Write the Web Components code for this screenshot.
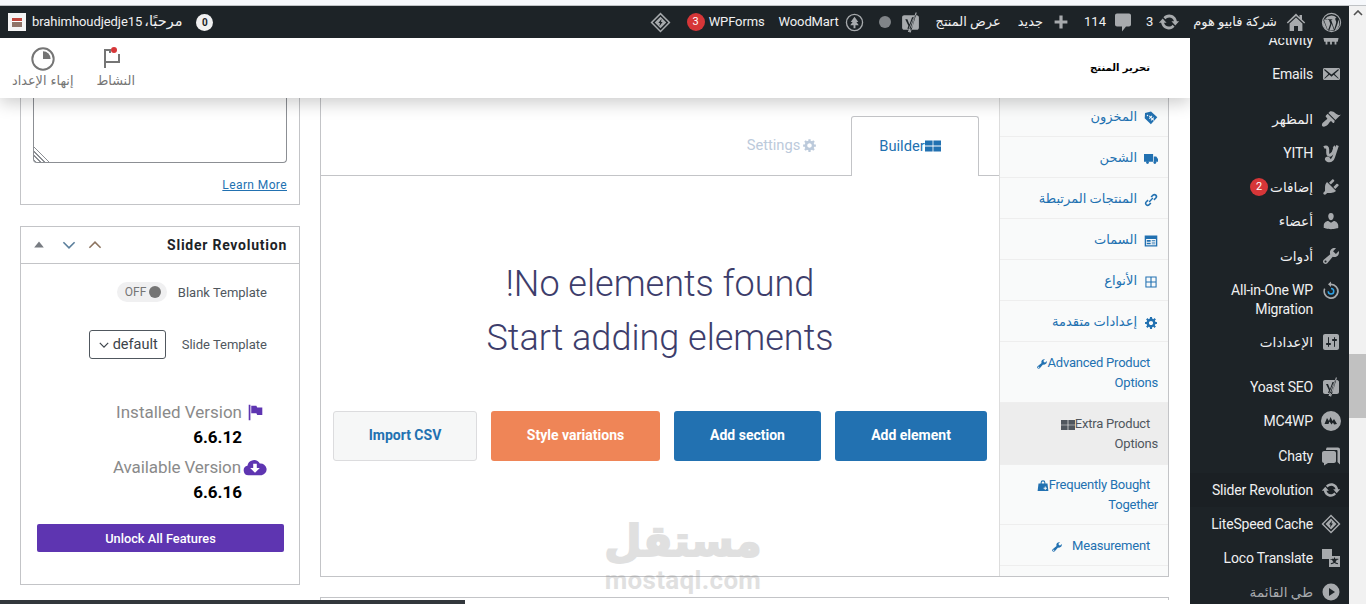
<!DOCTYPE html>
<html lang="ar"><head><meta charset="utf-8"><title>تحرير المنتج</title>
<style>html,body{margin:0;padding:0;height:604px;overflow:hidden;background:#fff;font-family:Roboto,"DejaVu Sans",sans-serif}</style>
</head><body>
<wp-app></wp-app>
<script>
const P={
wp:'<path fill-rule="evenodd" d="M10 .8a9.2 9.2 0 1 0 0 18.4A9.2 9.2 0 0 0 10 .8zm0 1a8.2 8.2 0 1 1 0 16.4A8.2 8.2 0 0 1 10 1.800zM2.700 7.200 6.600 17.600 8.900 11.200 7.600 7.500 6.500 7.400V6.800H10.800V7.400L9.700 7.500 12.700 16.400 14 12C14.700 9.800 14.600 8.900 13.900 7.800 13.300 6.800 13.500 5.500 14.800 5.300A7.300 7.300 0 0 0 3.800 6.800L6 6.800V7.400ZM16.300 7.100C16.500 9 15.800 10.800 15.200 12.500L13.200 17.500A7.300 7.300 0 0 0 16.300 7.100ZM10.200 11.300 8 17.300A7.300 7.300 0 0 0 12.300 17.100ZM2.400 8.200A7.300 7.300 0 0 0 5.900 17Z"/>',
home:'<path d="M10 1.500 .8 10.600l1 1L10 4l8.200 7.600 1-1-3.200-3V3h-2.500v2.300zM10 5.500 3.600 11.400V19h4.400v-5h4v5h4.400v-7.600z"/>',
update:'<path d="M10.200 3.280c3.530 0 6.430 2.610 6.920 6h2.080l-3.500 4-3.500-4h2.320c-.45-1.970-2.210-3.450-4.320-3.450-1.450 0-2.730.71-3.540 1.780L4.950 5.660C6.230 4.200 8.110 3.280 10.200 3.280zm-.4 13.440c-3.520 0-6.430-2.610-6.920-6H.8l3.500-4c1.170 1.330 2.330 2.670 3.500 4H5.480c.45 1.970 2.210 3.450 4.320 3.450 1.450 0 2.730-.71 3.540-1.780l1.710 1.950c-1.280 1.460-3.150 2.380-5.250 2.380z"/>',
comment:'<path d="M4 1.500h12c1.100 0 2 .9 2 2v9c0 1.100-.9 2-2 2h-3l-4 5v-5H4c-1.100 0-2-.9-2-2v-9c0-1.100.9-2 2-2z"/>',
plus:'<path d="M8 2h4v6h6v4h-6v6H8v-6H2V8h6z"/>',
yoast:'<path fill-rule="evenodd" d="M4 3h10l-1 2-1.500 3L9 14l-1 3H4c-1.100 0-2-.9-2-2V5c0-1.100.9-2 2-2zm10.500.2 1.500-.2c1.100.2 2 1 2 2v10c0 1.100-.9 2-2 2h-6l-.8 2H7.500l1-2.800c2-.1 2.900-1.300 3.500-3zM14.800 .5 9 19.500h1.200L16 .5zM5 7h2l2 5 2.500-7h1.800L9.500 14.800 8.800 16H7l1-2.800z"/>',
tree:'<path fill-rule="evenodd" d="M10 .8a9.200 9.200 0 1 0 0 18.400A9.200 9.200 0 0 0 10 .8zm0 1.400a7.800 7.800 0 1 1 0 15.600 7.800 7.800 0 0 1 0-15.600zM10 4 6 9.500h2L5.500 13H9v3h2v-3h3.500L12 9.500h2z"/>',
dia:'<path fill-rule="evenodd" d="M10 .5 19.500 10 10 19.500 .5 10zM10 2.500 2.500 10l7.500 7.500 7.500-7.500zM10 4.500 15.500 10 10 15.500 4.500 10zM11 6.500 8 10.500h1.500L9 13.500 12 9.500h-1.500z"/>',
mail:'<path d="M19 14.500v-9c0-.83-.67-1.500-1.500-1.500H3.490c-.83 0-1.500.67-1.500 1.500v9c0 .83.67 1.500 1.500 1.500H17.500c.83 0 1.500-.67 1.500-1.500zm-1.310-9.110c.33.33.15.67-.03.84L13.600 9.950l3.900 4.060c.12.14.2.36.06.51-.13.16-.43.15-.56.05l-4.370-3.730-2.140 1.950-2.130-1.950-4.370 3.730c-.13.1-.43.11-.56-.05-.14-.15-.06-.37.06-.51l3.900-4.060-4.060-3.720c-.18-.17-.36-.51-.03-.84s.67-.17.95.07l6.240 5.040 6.250-5.040c.28-.24.62-.4.95-.07z"/>',
cart:'<path d="M1 5h18l-1.500 7H16v3h-2v-3h-3v3H9v-3H6v3H4v-3H2.500z"/>',
brush:'<path d="M14.480 11.060L7.410 3.990l1.500-1.500c.5-.56 2.300-.47 3.510.32 1.210.8 1.430 1.280 2.910 2.100 1.180.64 2.450 1.260 4.450.85zm-.71.71L6.700 4.700 4.930 6.470c-.39.39-.39 1.020 0 1.410l1.060 1.060c.39.39.39 1.030 0 1.420-.6.6-1.430 1.110-2.210 1.690-.35.26-.7.53-1.010.84C1.430 13.230.28 16.080 1.400 17.200c1.120 1.120 3.970-.03 5.310-1.370.31-.31.58-.66.84-1.010.58-.78 1.090-1.610 1.690-2.210.39-.39 1.030-.39 1.420 0l1.060 1.060c.39.39 1.020.39 1.410 0z"/>',
yith:'<path fill="none" stroke="currentColor" stroke-width="3" d="M3 4.500c2.200-1.200 3.700-.5 3.700 2v3.500c0 2 1.300 2.700 3 1.800 1.800-1 3.300-3.500 3.800-6 .2-1-.2-1.800-1-2.300"/><path fill="none" stroke="currentColor" stroke-width="2.600" d="M16.500 2.500l-3.800 11.500c-1 3-3.500 4.300-6 3.700-1.600-.4-1.900-2-.9-2.600 1-.6 2.100.3 2.600 1.500"/>',
plug:'<path d="M13.110 4.360L9.870 7.600 8 5.730l3.240-3.240c.35-.34 1.050-.2 1.560.32.52.51.66 1.210.31 1.550zm-8 1.770l.91-1.120 9.010 9.010-1.190.84c-.71.71-2.630 1.160-3.820 1.160H6.140L4.900 17.260c-.59.59-1.540.59-2.120 0-.59-.58-.59-1.530 0-2.120l1.240-1.240v-3.880c0-1.130.4-3.190 1.090-3.890zm7.260 3.970l3.240-3.240c.34-.35 1.040-.21 1.550.31.52.51.66 1.210.31 1.550l-3.240 3.250z"/>',
user:'<path d="M10 9.250c-2.270 0-2.730-3.440-2.730-3.440C7 4.020 7.820 2 9.970 2c2.160 0 2.980 2.020 2.710 3.810 0 0-.41 3.440-2.680 3.440zm0 2.570L12.720 10c2.390 0 4.520 2.330 4.520 4.530v2.490s-3.650 1.130-7.240 1.130c-3.650 0-7.240-1.130-7.240-1.130v-2.490c0-2.250 1.940-4.480 4.470-4.480z"/>',
wrench:'<path d="M16.680 9.770c-1.340 1.340-3.300 1.670-4.950.99l-5.410 6.520c-.99.99-2.590.99-3.580 0s-.99-2.590 0-3.570l6.520-5.420c-.68-1.650-.35-3.610.99-4.950 1.280-1.280 3.120-1.620 4.720-1.060l-2.890 2.890 2.820 2.820 2.860-2.870c.53 1.580.18 3.390-1.080 4.650zM3.810 16.210c.4.39 1.040.39 1.430 0 .4-.4.4-1.040 0-1.430-.39-.4-1.030-.4-1.430 0-.39.39-.39 1.030 0 1.430z"/>',
sliders:'<path d="M18 16V4c0-1.100-.9-2-2-2H4c-1.100 0-2 .9-2 2v12c0 1.100.9 2 2 2h12c1.100 0 2-.9 2-2zM8 11h1c.55 0 1 .45 1 1s-.45 1-1 1H8v1.500c0 .28-.22.5-.5.5s-.5-.22-.5-.5V13H6c-.55 0-1-.45-1-1s.45-1 1-1h1V5.500c0-.28.22-.5.5-.5s.5.22.5.5V11zm5-2h-1c-.55 0-1-.45-1-1s.45-1 1-1h1V5.500c0-.28.22-.5.5-.5s.5.22.5.5V7h1c.55 0 1 .45 1 1s-.45 1-1 1h-1v5.500c0 .28-.22.5-.5.5s-.5-.22-.5-.5V9z"/>',
aio:'<path d="M10 .5 7 3.300 10 6V4.300a6 6 0 1 1-5.600 3.800L3 7.300A7.700 7.700 0 1 0 10 2.600z"/><path fill="#2ea2e6" d="M6.500 10.300a3.500 3.500 0 1 0 3.500-3.500v1.500a2 2 0 1 1-2 2z"/>',
mc:'<path fill-rule="evenodd" d="M10 0a10 10 0 1 0 0 20 10 10 0 0 0 0-20zM3.500 13l2.500-6 2 3 1.500-4 2 4 1.500-2 3 5-3 .5-1-2-1.500 2-2-3-1 2.500z"/>',
chat:'<path d="M6 1.500h11c1.100 0 2 .9 2 2v15l-2.500-2.500V5c0-.5-.4-1-1-1H5c0-1 .4-2.500 1-2.500z"/><path d="M3 5h10c1 0 2 .9 2 2v8c0 1.100-1 2-2 2H7l-4 2.500V17c-1 0-2-.9-2-2V7c0-1.100 1-2 2-2z"/>',
loco:'<path d="M1 1h10v10H1z"/><path fill-rule="evenodd" d="M8 8h11v11H8zM13 9.500v1.300h-3.500v1H11c.3 1 .8 1.800 1.500 2.500-.8.5-1.700.8-2.800 1l.4 1c1.300-.3 2.400-.7 3.300-1.400.9.7 2 1.100 3.300 1.400l.4-1c-1.100-.2-2-.5-2.800-1 .7-.7 1.200-1.500 1.500-2.500h1.500v-1H14V9.500z"/>',
play:'<path fill-rule="evenodd" d="M10 1.500a8.500 8.500 0 1 0 0 17 8.500 8.500 0 0 0 0-17zM8 6l6 4-6 4z"/>',
tag:'<path fill-rule="evenodd" d="M10 .8 19 8.800 9.800 19 1 10.500l.5-7.600zM5 5.200a1 1 0 1 0 .01 0zM8 6.500l-1 1 1.500 1.500-1.500 1.500 1 1 1.500-1.500 1.500 1.500-1.500 1.500 1 1 1.500-1.500 1.500 1.500 1-1-1.500-1.500 1.500-1.500-1-1-1.500 1.500-1.500-1.500 1.500-1.500-1-1-1.500 1.500z"/>',
truck:'<path d="M0 3h13v11H0zM14 6.500h3.500L20 10v4h-6z"/><circle cx="5" cy="15" r="2"/><circle cx="15.500" cy="15" r="2"/>',
link:'<path d="M17.700 2.300a3.900 3.900 0 0 0-5.500 0L9.400 5.100l1.500 1.500 2.800-2.800a1.800 1.800 0 0 1 2.500 2.500l-2.800 2.800 1.500 1.500 2.800-2.800a3.900 3.900 0 0 0 0-5.500zM9.100 13.400l-2.800 2.800a1.800 1.800 0 0 1-2.500-2.500l2.800-2.800-1.500-1.500-2.800 2.800a3.900 3.900 0 0 0 5.500 5.500l2.800-2.800zM6.600 12 12 6.600l1.400 1.400L8 13.400z"/>',
card:'<path fill-rule="evenodd" d="M1 2h18v16H1zM3 7v9h14V7zM4 8.500h5.500v2.500H4zM11 8.500h5v1h-5zM11 11h5v1h-5zM4 12.500h5.500v2H4zM11 13.500h5v1h-5z"/>',
grid:'<path fill-rule="evenodd" d="M2 2h16v16H2zM3.500 3.500v5.700h5.700V3.500zm7.300 0v5.700h5.700V3.500zM3.500 10.800v5.700h5.700v-5.700zm7.300 0v5.700h5.700v-5.700z"/>',
gear:'<path d="M18 12h-2.180c-.17.7-.44 1.350-.81 1.930l1.540 1.540-2.100 2.100-1.540-1.540c-.58.36-1.230.63-1.910.79V19H8v-2.180c-.68-.16-1.330-.43-1.910-.79l-1.540 1.540-2.120-2.120 1.540-1.540c-.36-.58-.63-1.230-.79-1.910H1V9.030h2.170c.16-.7.44-1.350.8-1.940L2.430 5.550l2.100-2.100 1.540 1.540c.58-.37 1.240-.64 1.930-.81V2h3v2.180c.68.16 1.330.43 1.910.79l1.540-1.540 2.120 2.120-1.540 1.540c.36.59.64 1.240.8 1.940H18V12zm-8.500 1.500c1.660 0 3-1.340 3-3s-1.340-3-3-3-3 1.340-3 3 1.340 3 3 3z" transform="translate(.5 -.5)"/>',
win:'<path d="M0 3h9.500v6.500H0zM10.500 3H20v6.500h-9.500zM0 10.500h9.500V17H0zM10.500 10.500H20V17h-9.500z"/>',
bag:'<path fill-rule="evenodd" d="M6 6V4.500a4 4 0 0 1 8 0V6h3.500L19 18.500H1L2.500 6zM7.800 6h4.400V4.500a2.200 2.200 0 0 0-4.400 0zM13 11v2h-2v1.500h2v2h1.500v-2h2V13h-2v-2z"/>',
flag:'<path d="M2 1h2v18H2zM5 2h6l1 2h6v9h-6l-1-2H5z"/>',
cloud:'<path fill-rule="evenodd" d="M4.500 16a4 4 0 0 1-.8-7.900A5.500 5.500 0 0 1 14 6.300 4.900 4.900 0 0 1 15.500 16zM8.500 6.500V10H6l4 4 4-4h-2.500V6.500z"/>',
chevd:'<path fill="none" stroke="currentColor" stroke-width="2" d="M3 6.500l7 7 7-7"/>',
chevu:'<path fill="none" stroke="currentColor" stroke-width="2" d="M3 13.500l7-7 7 7"/>',
tri:'<path d="M10 4l8 10H2z"/>',
flagdot:'<path fill="none" stroke="currentColor" stroke-width="2" d="M3 21V3h5v3M3 15h14V7"/><circle cx="12" cy="3" r="3" fill="#d63638"/>',
pie:'<circle cx="11" cy="11" r="9.800" fill="none" stroke="currentColor" stroke-width="1.800"/><path d="M11 4a7 7 0 0 1 7 7h-7z"/>'
};
function def(tag,html){customElements.define(tag,class extends HTMLElement{constructor(){super();this.attachShadow({mode:'open'}).innerHTML=html;}});}

customElements.define('wp-ic',class extends HTMLElement{
 connectedCallback(){const n=this.getAttribute('n'),s=this.getAttribute('s')||20,vb=this.getAttribute('vb')||'0 0 20 20';
  if(!this.shadowRoot)this.attachShadow({mode:'open'});
  this.shadowRoot.innerHTML=`<style>:host{display:inline-flex;flex:none;line-height:0;vertical-align:middle}svg{display:block;fill:currentColor}</style><svg width="${s}" height="${s}" viewBox="${vb}" aria-hidden="true">${P[n]||''}</svg>`;}
});

def('bar-item',`<style>:host{display:flex;align-items:center;height:32px;gap:var(--g,8px);font:13px/32px Roboto,"DejaVu Sans",sans-serif;color:#f0f0f1;white-space:nowrap}::slotted(wp-ic){color:#a7aaad}</style><slot></slot>`);
def('bar-badge',`<style>:host{display:inline-flex;align-items:center;justify-content:center;width:18px;height:18px;border-radius:9px;background:#d63638;color:#fff;font:11px/18px Roboto,sans-serif}</style><slot></slot>`);

def('admin-bar',`<style>:host{display:flex;flex:none;direction:rtl;height:32px;background:#1d2327;align-items:center;padding:0 7px 0 8px;box-sizing:border-box}
.dot{width:12px;height:12px;border-radius:50%;background:#808488;margin-right:9px}
.l{margin-right:auto;display:flex;align-items:center;gap:14px}
.av{width:18px;height:18px;background:#f4f4f4;display:flex;align-items:center;justify-content:center;margin-right:4px}.av i{display:block;width:10px;height:9px;background:linear-gradient(#c0463c 0 3px,#fff 3px 4px,#8f7468 4px)}
.z{width:17px;height:17px;border-radius:50%;background:#f0f0f1;color:#1d2327;font:700 10px/17px Roboto,sans-serif;text-align:center}
.g{font-size:14.500px}.la{letter-spacing:-.12px}
</style>
<bar-item><wp-ic n="wp" s="21"></wp-ic></bar-item>
<bar-item style="margin-right:15px;--g:9px"><wp-ic n="home" s="20"></wp-ic><span>شركة فابيو هوم</span></bar-item>
<bar-item style="margin-right:13px;--g:5px"><wp-ic n="update" s="22"></wp-ic><span>3</span></bar-item>
<bar-item style="margin-right:13px;--g:7px"><wp-ic n="comment" s="20"></wp-ic><span>114</span></bar-item>
<bar-item style="margin-right:15px;--g:10px"><wp-ic n="plus" s="16"></wp-ic><span>جديد</span></bar-item>
<bar-item style="margin-right:17px"><span>عرض المنتج</span></bar-item>
<bar-item style="margin-right:15px"><wp-ic n="yoast" s="21"></wp-ic></bar-item>
<div class="dot"></div>
<bar-item style="margin-right:15px;--g:6px"><wp-ic n="tree" s="19"></wp-ic><span class="la">WoodMart</span></bar-item>
<bar-item style="margin-right:14px;--g:4px"><span class="la">WPForms</span><bar-badge>3</bar-badge></bar-item>
<bar-item style="margin-right:16px"><wp-ic n="dia" s="21"></wp-ic></bar-item>
<div class="l"><div class="z">0</div><bar-item style="--g:2px"><span class="g">مرحبًا،</span><span style="letter-spacing:-.06px">brahimhoudjedje15</span><div class="av"><i></i></div></bar-item></div>`);

def('side-item',`<style>:host{display:flex;align-items:center;flex:none;min-height:34px;box-sizing:border-box;padding:0 8px 0 6px;gap:8px;font:14px/19px Roboto,"DejaVu Sans",sans-serif;letter-spacing:-.18px;color:#f0f0f1;direction:rtl}
:host([ar]){font-size:13.600px;letter-spacing:0}
.i{width:20px;display:flex;justify-content:center;color:#a7aaad;flex:none}
:host([top]) .i{align-self:flex-start;margin-top:7px}
.t{text-align:right;direction:ltr;flex:1;max-width:120px}:host([ar]) .t{direction:rtl;flex:none}
::slotted(bar-badge){margin-right:-6px}
</style><div class="i"><slot name="i"></slot></div><div class="t"><slot></slot></div><slot name="b"></slot>`);
def('side-bar',`<style>:host{display:flex;flex-direction:column;flex:none;width:159px;background:#1d2327;overflow:hidden}.w{margin-top:-15px;display:flex;flex-direction:column}</style><div class="w"><slot></slot></div>`);

def('edit-header',`<style>:host{display:flex;flex:none;height:60px;background:#fff;box-shadow:0 5px 16px rgba(0,0,0,.2);position:relative;z-index:3;align-items:center;justify-content:space-between;direction:rtl;padding:0 40px 0 12px;box-sizing:border-box}
h1{margin:0;font:700 10px/16px "DejaVu Sans",sans-serif;color:#000}
.r{display:flex;direction:rtl;gap:23px}.a{display:flex;flex-direction:column;align-items:center;font:12.800px/16px "DejaVu Sans",sans-serif;color:#757575;gap:2px}</style>
<h1>تحرير المنتج</h1><div class="r"><div class="a"><wp-ic n="flagdot" s="24" vb="0 0 24 24" style="margin-left:-3px"></wp-ic><span>النشاط</span></div><div class="a"><wp-ic n="pie" s="24" vb="0 0 22 22"></wp-ic><span>إنهاء الإعداد</span></div></div>`);

def('meta-box',`<style>:host{display:block;border:1px solid #c3c4c7;background:#fff;box-sizing:border-box;flex:none}</style><slot></slot>`);

def('learn-box',`<style>:host{display:block;flex:none;border:1px solid #c3c4c7;border-top:0;height:107px;box-sizing:border-box;padding:0 12px;background:#fff}
.ta{height:64px;border:1px solid #8c8f94;border-top:0;border-radius:0 0 4px 4px;position:relative}
.ta i{position:absolute;left:0;bottom:0;width:16px;height:16px;background:repeating-linear-gradient(45deg,transparent 0 1px,#8c8f94 1px 2px,transparent 2px 3px);clip-path:polygon(0 0,100% 100%,0 100%)}
a{display:block;text-align:right;font:12px/16px Roboto,sans-serif;letter-spacing:.4px;color:#2271b1;margin-top:14px}a span{text-decoration:underline}</style>
<div class="ta"><i></i></div><a><span>Learn More</span></a>`);

def('rev-box',`<style>:host{display:block;flex:none;height:359px;border:1px solid #c3c4c7;box-sizing:border-box;background:#fff;font-family:Roboto,sans-serif}
.h{height:36px;border-bottom:1px solid #c3c4c7;display:flex;align-items:center;padding:0 12px 0 12px;color:#787c82}
.h b{margin-left:auto;font:700 14px/20px Roboto,sans-serif;color:#1d2327;letter-spacing:.75px}
.b{padding:18px 12px 0 16px}
.row{display:flex;justify-content:flex-end;align-items:center;font-size:13px;color:#50575e}
.tog{display:flex;align-items:center;width:50px;height:20px;border-radius:10px;background:#f0f0f1;box-sizing:border-box;padding:0 6px 0 8px;font-size:12px;color:#757575;justify-content:space-between;margin-right:11px}
.tog i{width:12px;height:12px;border-radius:50%;background:#757575}
.sel{display:flex;align-items:center;width:77px;height:29px;border:1px solid #50575e;border-radius:3px;box-sizing:border-box;padding:0 8px 0 8px;gap:3px;font-size:14.500px;line-height:31px;color:#3c434a;margin-right:16px}
.v{display:flex;justify-content:flex-end;align-items:center;font-size:17px;line-height:25px;color:#8a8a8a;padding-right:23px}
.n{font:700 17px/25px Roboto,sans-serif;color:#000;text-align:right;padding-right:45px}
.btn{display:block;margin:19px 3px 0 0;height:28px;border-radius:2px;background:#5e35b1;color:#fff;font:500 12.800px/29px Roboto,sans-serif;text-align:center}
</style>
<div class="h"><wp-ic n="tri" s="12"></wp-ic><wp-ic n="chevd" s="16" style="color:#5b7f9c;margin-left:16px"></wp-ic><wp-ic n="chevu" s="16" style="color:#8d7460;margin-left:10px"></wp-ic><b>Slider Revolution</b></div>
<div class="b"><div class="row" style="margin-right:20px"><div class="tog"><span>OFF</span><i></i></div><span>Blank Template</span></div>
<div class="row" style="margin:28px 20px 0 0"><div class="sel"><wp-ic n="chevd" s="12"></wp-ic><span>default</span></div><span>Slide Template</span></div>
<div style="margin-top:41px"><div class="v"><span>Installed Version</span><wp-ic n="flag" s="17" style="color:#5e35b1;margin-left:5px"></wp-ic></div><div class="n" style="margin-bottom:5px">6.6.12</div>
<div class="v" style="padding-right:20px"><span style="letter-spacing:-.1px">Available Version</span><wp-ic n="cloud" s="24" style="color:#5e35b1;margin-left:2px"></wp-ic></div><div class="n">6.6.16</div></div>
<a class="btn">Unlock All Features</a></div>`);

def('tab-btn',`<style>:host{display:flex;align-items:center;justify-content:center;box-sizing:border-box;font:14.700px/20px Roboto,sans-serif;height:60px;gap:0}
:host([on]){width:128px;background:#fff;border:1px solid #c3c4c7;border-bottom:0;border-radius:3px 3px 0 0;color:#2271b1;margin-bottom:-1px;padding:0 10px 2px 0}
:host(:not([on])){color:#bccadb;width:74px;gap:2px}</style><slot></slot>`);

def('act-btn',`<style>:host{display:flex;align-items:center;justify-content:center;height:50px;box-sizing:border-box;border-radius:3px;padding-bottom:2px;font:700 14px/20px Roboto,sans-serif;color:#fff;background:#2271b1;flex:none}
:host([k=o]){background:#ef8557}:host([k=l]){background:#f6f7f7;border:1px solid #dcdcde;color:#2271b1}</style><slot></slot>`);

def('empty-state',`<style>:host{display:block;direction:rtl;text-align:center;color:#3d3d6b;font:300 36px/54px Roboto,sans-serif;padding-top:81px}
p{margin:0}.btns{display:flex;justify-content:flex-start;gap:14px;padding:0 12px;margin-top:46px}</style>
<p>No elements found!</p><p dir="ltr">Start adding elements</p><div class="btns"><slot></slot></div>`);

def('builder-panel',`<style>:host{display:block;flex:1;min-width:0;background:#fff}
.tabs{display:flex;direction:rtl;border-bottom:1px solid #c3c4c7;margin-top:-1px;padding:0 20px 0 0;height:59px;align-items:flex-end}
.s{display:flex;direction:ltr;margin-right:32px}</style>
<div style="height:19px"></div>
<div class="tabs"><tab-btn on style="direction:ltr"><span>Builder</span><wp-ic n="win" s="16"></wp-ic></tab-btn><div class="s"><tab-btn><span>Settings</span><wp-ic n="gear" s="15"></wp-ic></tab-btn></div></div>
<slot></slot>`);

def('prod-tab',`<style>:host{display:block;box-sizing:border-box;min-height:41px;border-bottom:1px solid #eee;direction:rtl;padding:11px 10px 0 0;font:13px/20px Roboto,"DejaVu Sans",sans-serif;color:#2271b1;text-align:right;background:#f9fafa}
:host([two]){height:61px;text-indent:8px;letter-spacing:-.22px}:host([on]){background:#ededed;color:#50575e;height:62px}
::slotted(wp-ic){margin-left:7px}:host([two]) ::slotted(wp-ic){margin:0}</style><slot></slot>`);
def('tab-list',`<style>:host{display:block;flex:none;width:168px;border-left:1px solid #ddd;background:#f9fafa;overflow:hidden}.w{margin-top:-2px}</style><div class="w"><slot></slot></div>`);

def('wm-mark',`<style>:host{position:absolute;left:604px;top:476px;width:158px;text-align:center;color:#8f8f8f;opacity:.27;pointer-events:none;z-index:2}
.a{font:700 43px/54px "DejaVu Sans",sans-serif;direction:rtl;-webkit-text-stroke:2px #8f8f8f}.b{font:700 26px/24px Roboto,sans-serif;letter-spacing:.3px}</style><div class="a">مستقل</div><div class="b">mostaql.com</div>`);

def('wp-app',`<style>:host{display:flex;width:1366px;height:604px;flex-direction:column;overflow:hidden;font-family:Roboto,"DejaVu Sans",sans-serif}
.top{height:6px;flex:none;background:#f6f8fb;border-bottom:1px solid #bfc2c5;box-sizing:border-box}
.r{flex:1;display:flex;min-height:0}.page{width:1349px;display:flex;flex-direction:column}
.sb{width:17px;flex:none;background:#f1f1f1;display:flex;flex-direction:column}.up{height:14px;display:flex;align-items:center;justify-content:center;color:#505050}.th{height:64px;background:#c1c1c1;margin-top:334px}
.body{flex:1;display:flex;min-height:0}.main{width:1190px;display:flex;flex-direction:column;position:relative;overflow:hidden}
.cols{flex:1;display:flex;min-height:0;padding-left:20px;gap:20px;overflow:hidden}
.lc{width:280px;flex:none;display:flex;flex-direction:column;gap:21px}
.cc{width:849px;flex:none;display:flex;flex-direction:column;gap:20px}
.box{height:479px;border-top:0}
.hb{height:4px;flex:none;background:#fff;display:flex}.hb i{display:block;width:465px;background:#32373c}
</style>
<div class="top"></div>
<div class="r"><div class="page"><admin-bar></admin-bar><div class="body"><div class="main"><edit-header></edit-header>
<div class="cols"><div class="lc"><learn-box></learn-box><rev-box></rev-box></div>
<div class="cc"><meta-box class="box"><div style="display:flex;height:100%">
<builder-panel><empty-state>
<act-btn style="width:152px">Add element</act-btn><act-btn style="width:147px">Add section</act-btn><act-btn k="o" style="width:169px">Style variations</act-btn><act-btn k="l" style="width:144px">Import CSV</act-btn></empty-state></builder-panel>
<tab-list>
<prod-tab><wp-ic n="tag" s="14"></wp-ic>المخزون</prod-tab>
<prod-tab><wp-ic n="truck" s="14"></wp-ic>الشحن</prod-tab>
<prod-tab><wp-ic n="link" s="14"></wp-ic>المنتجات المرتبطة</prod-tab>
<prod-tab><wp-ic n="card" s="14"></wp-ic>السمات</prod-tab>
<prod-tab><wp-ic n="grid" s="14"></wp-ic>الأنواع</prod-tab>
<prod-tab><wp-ic n="gear" s="14"></wp-ic>إعدادات متقدمة</prod-tab>
<prod-tab two>Advanced Product<wp-ic n="wrench" s="12"></wp-ic><br>Options</prod-tab>
<prod-tab two on>Extra Product<wp-ic n="win" s="14"></wp-ic><br>Options</prod-tab>
<prod-tab two style="height:60px;padding-top:10px">Frequently Bought<wp-ic n="bag" s="12"></wp-ic><br>Together</prod-tab>
<prod-tab style="text-indent:8px;letter-spacing:-.2px">Measurement<wp-ic n="wrench" s="12" style="margin-right:9px;margin-left:0"></wp-ic></prod-tab>
</tab-list></div></meta-box><meta-box style="height:20px;border-bottom:0"></meta-box></div></div>
<div class="hb"><i></i></div><wm-mark></wm-mark></div>
<side-bar>
<side-item><wp-ic slot="i" n="cart" s="18"></wp-ic>Activity</side-item>
<side-item style="margin-bottom:11px"><wp-ic slot="i" n="mail" s="20"></wp-ic>Emails</side-item>
<side-item ar><wp-ic slot="i" n="brush"></wp-ic>المظهر</side-item>
<side-item><wp-ic slot="i" n="yith"></wp-ic>YITH</side-item>
<side-item ar><wp-ic slot="i" n="plug"></wp-ic>إضافات<bar-badge slot="b">2</bar-badge></side-item>
<side-item ar><wp-ic slot="i" n="user"></wp-ic>أعضاء</side-item>
<side-item ar style="margin-top:1px"><wp-ic slot="i" n="wrench"></wp-ic>أدوات</side-item>
<side-item top style="height:52px;padding-top:1px"><wp-ic slot="i" n="aio"></wp-ic>All-in-One WP Migration</side-item>
<side-item ar style="margin-bottom:11px"><wp-ic slot="i" n="sliders"></wp-ic>الإعدادات</side-item>
<side-item><wp-ic slot="i" n="yoast"></wp-ic>Yoast SEO</side-item>
<side-item><wp-ic slot="i" n="mc"></wp-ic>MC4WP</side-item>
<side-item style="margin-top:1px"><wp-ic slot="i" n="chat"></wp-ic>Chaty</side-item>
<side-item style="background:#1b2024"><wp-ic slot="i" n="update"></wp-ic>Slider Revolution</side-item>
<side-item><wp-ic slot="i" n="dia"></wp-ic>LiteSpeed Cache</side-item>
<side-item><wp-ic slot="i" n="loco"></wp-ic>Loco Translate</side-item>
<side-item ar style="color:#a7aaad"><wp-ic slot="i" n="play"></wp-ic>طي القائمة</side-item>
</side-bar></div></div>
<div class="sb"><div class="up"><svg width="10" height="6" viewBox="0 0 10 6"><path fill="none" stroke="currentColor" stroke-width="1.600" d="M1 5l4-4 4 4"/></svg></div><div class="th"></div></div></div>`);
</script>
</body></html>
